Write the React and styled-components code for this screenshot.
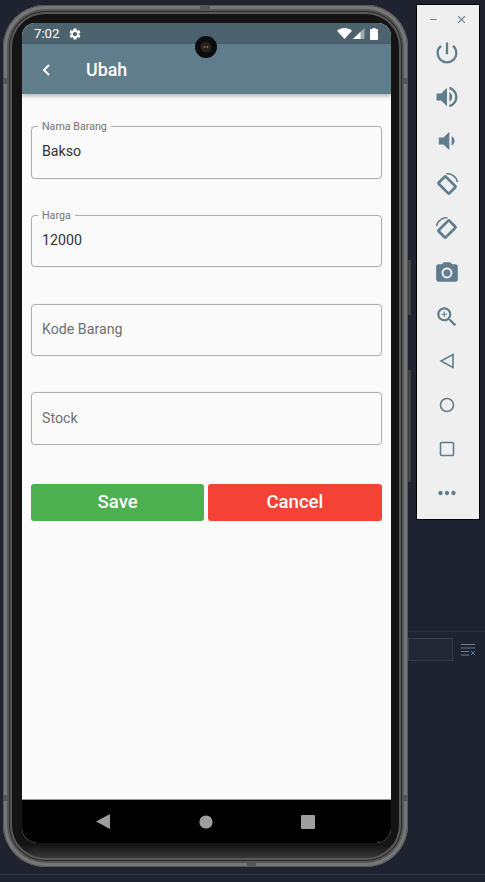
import React from "react";
import styled, { createGlobalStyle } from "styled-components";
import {
  MdPowerSettingsNew,
  MdVolumeUp,
  MdVolumeDown,
  MdPhotoCamera,
  MdZoomIn,
  MdSettings,
  MdMoreHoriz,
  MdClose,
  MdRemove,
} from "react-icons/md";

const GlobalStyle = createGlobalStyle`
  html, body {
    margin: 0;
    padding: 0;
    width: 485px;
    height: 882px;
    overflow: hidden;
    background: #1f2330;
    font-family: Roboto, "Liberation Sans", sans-serif;
  }
`;

const Desktop = styled.div`
  width: 485px;
  height: 882px;
  display: flex;
  flex-direction: column;
`;

const Workspace = styled.div`
  height: 875px;
  display: flex;
  align-items: flex-start;
  border-bottom: 1px solid #343946;
  box-sizing: border-box;
  padding: 5px 0 0 3px;
`;

const Phone = styled.div`
  position: relative;
  width: 405px;
  height: 862px;
  flex: none;
  box-sizing: border-box;
  padding: 18px 17px 24px 19px;
  border-radius: 42px;
  background: linear-gradient(to top, #3c3c3c 8px, #141414 22px);
  box-shadow:
    inset 0 0 0 1px #555,
    inset 0 0 0 4px #777,
    inset 0 0 0 6px #565656,
    inset 0 0 0 7px #2a2a2a,
    inset 0 0 0 9px #585858;
`;

const SideKey = styled.div`
  position: absolute;
  right: -3px;
  top: ${(p) => p.$top}px;
  width: 3px;
  height: ${(p) => p.$height}px;
  background: #3f3f3f;
`;

const EdgeBand = styled.div`
  position: absolute;
  background: #555;
  left: ${(p) => p.$left};
  right: ${(p) => p.$right};
  top: ${(p) => p.$top};
  bottom: ${(p) => p.$bottom};
  width: ${(p) => p.$width}px;
  height: ${(p) => p.$height}px;
`;

const Camera = styled.div`
  position: absolute;
  z-index: 2;
  left: 192px;
  top: 31px;
  width: 22px;
  height: 22px;
  border-radius: 50%;
  background: #0c0c0c;
  display: flex;
  align-items: center;
  justify-content: center;
`;

const Screen = styled.div`
  height: 100%;
  display: flex;
  flex-direction: column;
  overflow: hidden;
  border-radius: 13px 13px 15px 15px;
  background: #fafafa;
`;

const StatusBar = styled.div`
  height: 21px;
  flex: none;
  display: flex;
  align-items: center;
  padding: 0 13px 0 12px;
  gap: 9px;
  background: #4c626d;
  color: #fff;
  font-size: 13.2px;
  font-weight: 400;
`;

const StatusIcons = styled.div`
  margin-left: auto;
  display: flex;
  align-items: center;
  gap: 1px;
`;

const BatteryIcon = styled.svg`
  margin-left: 4px;
`;

const AppBar = styled.header`
  height: 50px;
  flex: none;
  display: flex;
  align-items: center;
  background: #607d8b;
  color: #fff;
  box-shadow: 0 2px 4px rgba(0, 0, 0, 0.3);
  position: relative;
  padding: 1px 0 0 19px;
  box-sizing: border-box;
`;

const Title = styled.h1`
  margin: 0 0 0 34px;
  font-size: 17.8px;
  font-weight: 500;
`;

const Form = styled.main`
  flex: 1;
  display: flex;
  flex-direction: column;
  gap: 36.3px;
  padding: 32px 9.5px 0 9px;
`;

const Field = styled.div`
  position: relative;
  height: 52.5px;
  box-sizing: border-box;
  display: flex;
  align-items: center;
  padding: ${(p) => (p.$filled ? "0 10px 2px" : "0 10px 1px")};
  border: 1px solid #b0b0b0;
  border-radius: 4px;
  box-shadow: 0 0 1px #bdbdbd;
  font-size: 14.2px;
  color: ${(p) => (p.$filled ? "#333" : "#707070")};
`;

const FieldLabel = styled.span`
  position: absolute;
  left: 6px;
  top: -7px;
  padding: 0 4px;
  background: #fafafa;
  font-size: 10.7px;
  line-height: 13px;
  color: #757575;
`;

const Actions = styled.div`
  display: grid;
  grid-template-columns: 1fr 1fr;
  gap: 4px;
  margin-top: 2.5px;
`;

const ActionButton = styled.button`
  height: 37px;
  border: 0;
  border-radius: 3px;
  background: ${(p) => p.$color};
  color: #fff;
  font-family: inherit;
  font-size: 18.6px;
  font-weight: 500;
`;

const NavBar = styled.nav`
  height: 44px;
  flex: none;
  display: flex;
  align-items: center;
  padding: 0 76px 0 74px;
  justify-content: space-between;
  background: #000;
  border-top: 1px solid #9a9a9a;
  box-sizing: border-box;
`;

const SideColumn = styled.div`
  margin-left: 8px;
  width: 69px;
  display: flex;
  flex-direction: column;
`;

const Panel = styled.aside`
  width: 64px;
  height: 516px;
  margin-top: -1px;
  box-sizing: border-box;
  border: 1px solid #000;
  background: #efefef;
  color: #5f7d8c;
  display: flex;
  flex-direction: column;
  align-items: center;
`;

const WindowControls = styled.div`
  height: 25.5px;
  align-self: stretch;
  flex: none;
  display: flex;
  align-items: center;
  justify-content: space-between;
  padding: 2.5px 11px 0 11px;
  box-sizing: border-box;
  color: #5f7d8c;
`;

const ToolButton = styled.div`
  height: 44px;
  width: 44px;
  flex: none;
  display: flex;
  align-items: center;
  justify-content: center;
  font-size: ${(p) => p.$size || 26}px;
`;

const Toolbar = styled.div`
  display: flex;
  flex-direction: column;
  margin-left: -2px;
`;

const LogTools = styled.div`
  margin-top: 111px;
  padding-top: 6px;
  border-top: 1px solid #2f3340;
  margin-left: -8px;
  width: 85px;
  display: flex;
  align-items: center;
  gap: 8px;
`;

const SearchBox = styled.div`
  width: 45px;
  height: 23px;
  box-sizing: border-box;
  border: 1px solid #363b4a;
  background: #232733;
`;

const RotateSvg = styled.svg`
  overflow: visible;
  transform: ${(p) => (p.$flip ? "scaleX(-1)" : "none")};
`;

const RotateIcon = ({ flip }) => (
  <RotateSvg $flip={flip} width="24" height="24" viewBox="0 0 24 24" fill="none" stroke="currentColor">
    <rect x="4.5" y="7" width="15" height="10" rx="1" strokeWidth="2.8" transform="rotate(45 12 12)" />
    <path d="M11.5 1C16 0 21.5 3.5 22.5 9" strokeWidth="1.6" />
  </RotateSvg>
);

const Wifi = () => (
  <svg width="15" height="11" viewBox="0 0 15 11">
    <path d="M0 2.8C4.3-.9 10.7-.9 15 2.8L7.5 11Z" fill="#fff" />
  </svg>
);

const Signal = () => (
  <svg width="12" height="11" viewBox="0 0 12 11">
    <path d="M0 11 11.5 0V11Z" fill="#fff" fillOpacity="0.45" />
    <path d="M0 11 7.5 3.8V11Z" fill="#fff" />
  </svg>
);

const Battery = () => (
  <BatteryIcon width="8" height="12" viewBox="0 0 8 12">
    <path d="M2.5 0H5.5V1H7.2C7.6 1 8 1.4 8 1.8V11.2C8 11.6 7.6 12 7.2 12H.8C.4 12 0 11.6 0 11.2V1.8C0 1.4.4 1 .8 1H2.5Z" fill="#fff" />
  </BatteryIcon>
);

const ClearLog = () => (
  <svg width="15" height="12" viewBox="0 0 15 12" fill="none" stroke="#6d7a90" strokeWidth="1">
    <path d="M0 .5H14M0 4H14M0 7.5H8M0 11H8" />
    <path d="M10 7L14 11M14 7L10 11" stroke="#4d78a8" />
  </svg>
);

function App() {
  return (
    <Desktop>
      <GlobalStyle />
      <Workspace>
        <Phone>
          <SideKey $top={255} $height={55} />
          <SideKey $top={365} $height={112} />
          <EdgeBand $left="197px" $top="0" $width={10} $height={4} />
          <EdgeBand $left="244px" $bottom="0" $width={9} $height={6} />
          <EdgeBand $left="0" $top="73px" $width={5} $height={6} />
          <EdgeBand $right="0" $top="73px" $width={5} $height={6} />
          <EdgeBand $left="0" $top="790px" $width={5} $height={6} />
          <EdgeBand $right="0" $top="790px" $width={5} $height={6} />
          <Camera>
            <svg width="12" height="12" viewBox="0 0 12 12">
              <circle cx="6" cy="6" r="5.5" fill="#24231f" />
              <circle cx="4.5" cy="6" r="0.9" fill="#a8702c" />
              <circle cx="7.5" cy="6" r="0.9" fill="#a8702c" />
            </svg>
          </Camera>
          <Screen>
            <StatusBar>
              7:02
              <MdSettings size={14} />
              <StatusIcons>
                <Wifi />
                <Signal />
                <Battery />
              </StatusIcons>
            </StatusBar>
            <AppBar>
              <svg width="11" height="14" viewBox="0 0 11 14" fill="none" stroke="#fff" strokeWidth="2">
                <path d="M8 2 3 7 8 12" />
              </svg>
              <Title>Ubah</Title>
            </AppBar>
            <Form>
              <Field $filled>
                <FieldLabel>Nama Barang</FieldLabel>
                Bakso
              </Field>
              <Field $filled>
                <FieldLabel>Harga</FieldLabel>
                12000
              </Field>
              <Field>Kode Barang</Field>
              <Field>Stock</Field>
              <Actions>
                <ActionButton $color="#4caf50">Save</ActionButton>
                <ActionButton $color="#f44336">Cancel</ActionButton>
              </Actions>
            </Form>
            <NavBar>
              <svg width="14" height="15" viewBox="0 0 14 15">
                <path d="M14 0V15L0 7.5Z" fill="#9e9e9e" />
              </svg>
              <svg width="14" height="14" viewBox="0 0 14 14">
                <circle cx="7" cy="7" r="6.6" fill="#9e9e9e" />
              </svg>
              <svg width="14" height="14" viewBox="0 0 14 14">
                <rect width="14" height="14" rx="1" fill="#9e9e9e" />
              </svg>
            </NavBar>
          </Screen>
        </Phone>
        <SideColumn>
          <Panel>
            <WindowControls>
              <MdRemove size={11} />
              <MdClose size={13} />
            </WindowControls>
            <Toolbar>
              <ToolButton $size={28}><MdPowerSettingsNew /></ToolButton>
              <ToolButton $size={28}><MdVolumeUp /></ToolButton>
              <ToolButton $size={28}><MdVolumeDown /></ToolButton>
              <ToolButton><RotateIcon /></ToolButton>
              <ToolButton><RotateIcon flip /></ToolButton>
              <ToolButton><MdPhotoCamera /></ToolButton>
              <ToolButton><MdZoomIn /></ToolButton>
              <ToolButton>
                <svg width="16" height="16" viewBox="0 0 16 16" fill="none" stroke="currentColor" strokeWidth="1.6">
                  <path d="M14 1.5V14.5L2 8Z" />
                </svg>
              </ToolButton>
              <ToolButton>
                <svg width="16" height="16" viewBox="0 0 16 16" fill="none" stroke="currentColor" strokeWidth="1.6">
                  <circle cx="8" cy="8" r="6.5" />
                </svg>
              </ToolButton>
              <ToolButton>
                <svg width="16" height="16" viewBox="0 0 16 16" fill="none" stroke="currentColor" strokeWidth="1.6">
                  <rect x="1.5" y="1.5" width="13" height="13" rx="1" />
                </svg>
              </ToolButton>
              <ToolButton><MdMoreHoriz /></ToolButton>
            </Toolbar>
          </Panel>
          <LogTools>
            <SearchBox />
            <ClearLog />
          </LogTools>
        </SideColumn>
      </Workspace>
    </Desktop>
  );
}

export default App;
